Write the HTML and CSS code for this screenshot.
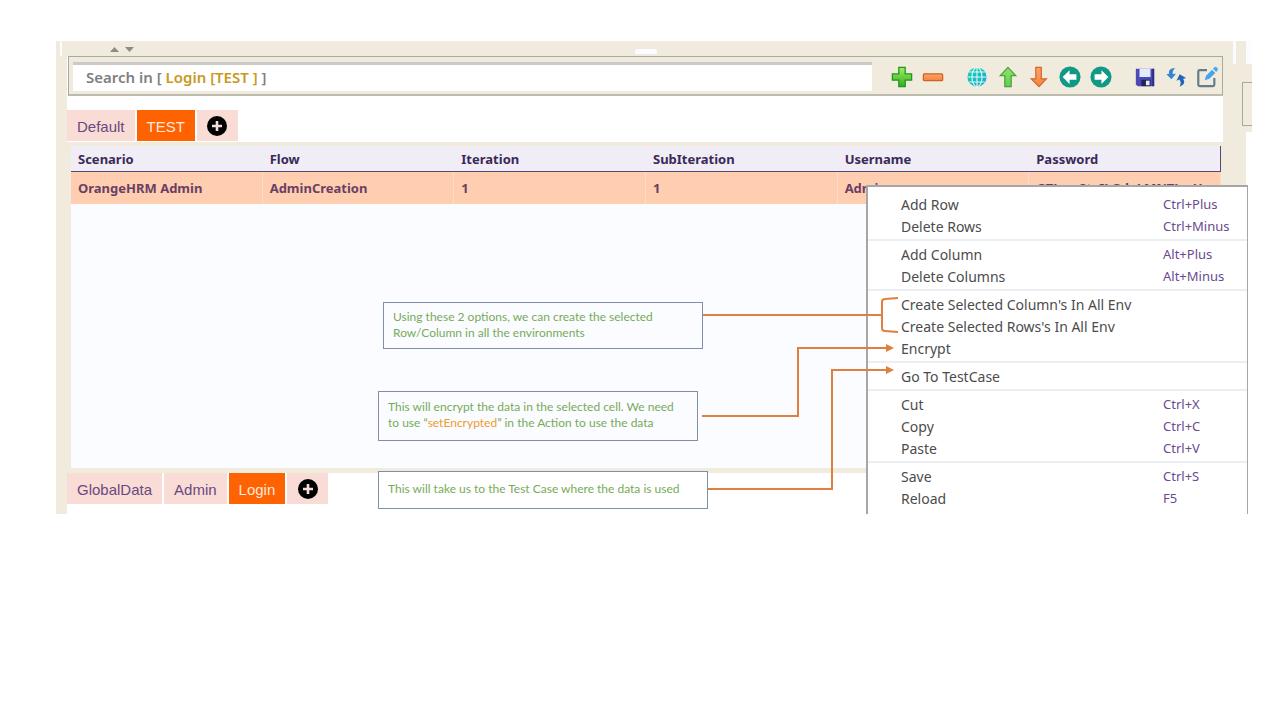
FILE: index.html
```
<!DOCTYPE html>
<html lang="en">
<head>
<meta charset="utf-8">
<title>Test Data</title>
<link rel="stylesheet" href="styles.css">
</head>
<body>
<main class="workspace">
  <div class="splitter">
    <svg class="split-arrows" viewBox="0 0 26 8"><path d="M1 7L5.500 2L10 7ZM16 2H25L20.500 7Z" fill="#8f8b86"/></svg>
    <span class="grip"></span>
  </div>

  <section class="content">
    <div class="toolbar">
      <div class="search">
        <label for="search">Search in [ <b>Login [TEST ]</b> ]</label>
        <input id="search" type="text">
      </div>
      <div class="tools">
        <button type="button" aria-label="Add row"><svg viewBox="0 0 24 24"><defs><linearGradient id="gr" x2="0" y2="1"><stop stop-color="#a5ec6b"/><stop offset="1" stop-color="#2fae1f"/></linearGradient><linearGradient id="lg" x2="0" y2="1"><stop stop-color="#8fe070"/><stop offset="1" stop-color="#62cf4c"/></linearGradient><linearGradient id="or" x2="0" y2="1"><stop stop-color="#ffa263"/><stop offset="1" stop-color="#f58542"/></linearGradient><linearGradient id="gl" x2="1" y2="1"><stop stop-color="#19d2b4"/><stop offset="1" stop-color="#12a9d6"/></linearGradient></defs><path d="M8.500 1.500H15.500V8.500H22.500V15.500H15.500V22.500H8.500V15.500H1.500V8.500H8.500Z" fill="url(#gr)" stroke="#22961b" stroke-width="1.400"/></svg></button>
        <button type="button" aria-label="Delete row"><svg viewBox="0 0 24 24"><rect x="1.500" y="8.500" width="21" height="7.500" rx="1" fill="url(#or)" stroke="#cc6428" stroke-width="1.400"/></svg></button>
        <button type="button" class="group" aria-label="Global data"><svg viewBox="0 0 24 24"><circle cx="12" cy="12" r="10.500" fill="url(#gl)"/><path d="M12 1.500V22.500M1.500 12H22.500M3.500 6.500H20.500M3.500 17.500H20.500" stroke="#e5f8ef" stroke-width="1.200"/><ellipse cx="12" cy="12" rx="5.500" ry="10.500" fill="none" stroke="#e5f8ef" stroke-width="1.200"/></svg></button>
        <button type="button" aria-label="Move up"><svg viewBox="0 0 24 24"><path d="M12 1.500L20.500 10.500H15.500V22.500H8.500V10.500H3.500Z" fill="url(#lg)" stroke="#4aa138" stroke-width="1.300"/></svg></button>
        <button type="button" aria-label="Move down"><svg viewBox="0 0 24 24"><path d="M12 22.500L3.500 14H8.500V1.500H14.500V14H20Z" fill="url(#or)" stroke="#d0672f" stroke-width="1.300"/></svg></button>
        <button type="button" aria-label="Previous"><svg viewBox="0 0 24 24"><circle cx="12" cy="12" r="11.500" fill="#109a86"/><path d="M4 12L11.500 4.500V9H19V15H11.500V19.500Z" fill="#fff"/></svg></button>
        <button type="button" aria-label="Next"><svg viewBox="0 0 24 24"><circle cx="12" cy="12" r="11.500" fill="#109a86"/><path d="M20 12L12.500 4.500V9H5V15H12.500V19.500Z" fill="#fff"/></svg></button>
        <button type="button" class="group" aria-label="Save"><svg viewBox="0 0 24 24"><path d="M2 3H22V22H4L2 20Z" fill="#4a49b8"/><path d="M6 3H18V12H6Z" fill="#e4ebfb"/><path d="M8 15H18V22H8Z" fill="#22234f"/><path d="M13 16H17V21H13Z" fill="#e8ebff"/><path d="M20 3H22V22H20Z" fill="#2b2b83"/></svg></button>
        <button type="button" aria-label="Reload"><svg viewBox="0 0 24 24"><path d="M11 2.500C6 2 3.500 5 4.500 8.500L1.500 9L7 14.500L12 8.500L8.500 8.800C8 6 9 4.500 11 2.500Z" fill="#3285d5"/><path d="M16 22.500C21.500 20.500 22 17 19.700 14.300L23 13L16 9L12.500 16L15.500 14.800C17.500 17 17.500 19 16 22.500Z" fill="#2466b4"/></svg></button>
        <button type="button" aria-label="Edit"><svg viewBox="0 0 24 24"><path d="M12 4.500H4Q2.500 4.500 2.500 6V20.500Q2.500 22 4 22H18.500Q20 22 20 20.500V13" fill="none" stroke="#637d89" stroke-width="2.400"/><path d="M9.500 15.500L11 10.500L17.500 4L21 7.500L14.500 14Z" fill="#42a5ed"/><path d="M18.500 3L20.500 1Q21.300 .3 22.200 1.200L23.700 2.700Q24.400 3.600 23.600 4.500L22 6.500Z" fill="#4eaaf0"/></svg></button>
      </div>
    </div>

    <nav class="tabs tabs-top" aria-label="Environments">
      <button type="button" class="tab">Default</button>
      <button type="button" class="tab active">TEST</button>
      <button type="button" class="tab add" aria-label="Add environment"><svg viewBox="0 0 20 20"><circle cx="10" cy="10" r="10"/><path d="M10 5V15M5 10H15" stroke="#f8dcd5" stroke-width="2.600"/></svg></button>
    </nav>

    <div class="grid-pane">
      <table class="data">
        <thead><tr><th>Scenario</th><th>Flow</th><th>Iteration</th><th>SubIteration</th><th>Username</th><th>Password</th></tr></thead>
        <tbody><tr><td>OrangeHRM Admin</td><td>AdminCreation</td><td>1</td><td>1</td><td>Admin</td><td>GTLw+StvILGdeLMNTLwU</td></tr></tbody>
      </table>
    </div>

    <nav class="tabs" aria-label="Data sheets">
      <button type="button" class="tab">GlobalData</button>
      <button type="button" class="tab">Admin</button>
      <button type="button" class="tab active">Login</button>
      <button type="button" class="tab add" aria-label="Add sheet"><svg viewBox="0 0 20 20"><circle cx="10" cy="10" r="10"/><path d="M10 5V15M5 10H15" stroke="#f8dcd5" stroke-width="2.600"/></svg></button>
    </nav>
  </section>

  <aside class="side">
    <div class="side-top"></div>
    <div class="side-tab"></div>
  </aside>

  <div class="menu" role="menu">
    <button type="button" role="menuitem"><span>Add Row</span><kbd>Ctrl+Plus</kbd></button>
    <button type="button" role="menuitem"><span>Delete Rows</span><kbd>Ctrl+Minus</kbd></button>
    <hr>
    <button type="button" role="menuitem"><span>Add Column</span><kbd>Alt+Plus</kbd></button>
    <button type="button" role="menuitem"><span>Delete Columns</span><kbd>Alt+Minus</kbd></button>
    <hr>
    <button type="button" role="menuitem"><span>Create Selected Column's In All Env</span></button>
    <button type="button" role="menuitem"><span>Create Selected Rows's In All Env</span></button>
    <button type="button" role="menuitem"><span>Encrypt</span></button>
    <hr>
    <button type="button" role="menuitem"><span>Go To TestCase</span></button>
    <hr>
    <button type="button" role="menuitem"><span>Cut</span><kbd>Ctrl+X</kbd></button>
    <button type="button" role="menuitem"><span>Copy</span><kbd>Ctrl+C</kbd></button>
    <button type="button" role="menuitem"><span>Paste</span><kbd>Ctrl+V</kbd></button>
    <hr>
    <button type="button" role="menuitem"><span>Save</span><kbd>Ctrl+S</kbd></button>
    <button type="button" role="menuitem"><span>Reload</span><kbd>F5</kbd></button>
  </div>

  <p class="note note-env">Using these 2 options, we can create the selected<br>Row/Column in all the environments</p>
  <p class="note note-encrypt">This will encrypt the data in the selected cell. We need<br>to use “<em>setEncrypted</em>” in the Action to use the data</p>
  <p class="note note-goto">This will take us to the Test Case where the data is used</p>

  <svg class="connectors" width="200" height="210" viewBox="0 0 200 210" fill="none" stroke="#e07f3e" stroke-width="2">
    <path d="M3 25H182M198 8L185 9Q182 9 182 12V38Q182 41 185 41L198 42"/>
    <path d="M2 126H98V58H188M8 199H132V80H188"/>
    <path d="M186 54L194 58L186 62ZM186 76L194 80L186 84Z" fill="#e07f3e" stroke="none"/>
  </svg>
</main>
</body>
</html>
```
FILE: styles.css
```
* { box-sizing: border-box; }

body {
  margin: 0;
  background: #fff;
  font-family: "Noto Sans", "Open Sans", sans-serif;
  font-size: 13px;
}

button {
  margin: 0;
  padding: 0;
  border: 0;
  background: none;
  font: inherit;
  color: inherit;
}

.workspace {
  position: relative;
  display: grid;
  grid-template-columns: 11px 1fr 29px;
  grid-template-rows: 15px auto;
  margin: 41px 28px 0 56px;
  background: #f1ebde;
}

.splitter {
  grid-column: 1 / 3;
  display: flex;
  align-items: flex-start;
  margin-left: 4px;
  border-left: 2px solid #fafcff;
  padding-left: 47px;
}

.split-arrows { width: 26px; height: 8px; margin-top: 4px; }

.grip {
  width: 22px;
  height: 5px;
  margin: 8px auto 0 500px;
  border-radius: 3px 3px 0 0;
  background: #fafcff;
}

.content {
  grid-column: 2;
  grid-row: 2;
  display: flex;
  flex-direction: column;
  background: #fff;
}

.toolbar {
  display: flex;
  height: 40px;
  margin-left: 1px;
  padding: 5px 0 3px 4px;
  border: 1px solid #aaa9a0;
  border-bottom: 2px solid #bdbbad;
  background: #f1ebde;
}

.search {
  flex: 1;
  display: flex;
  align-items: center;
  padding: 0 0 3px 13px;
  border-top: 3px solid #cccac8;
  background: #fff;
  font-size: 15px;
  line-height: 20px;
  font-weight: 600;
  color: #808080;
}

.search b { font-weight: 600; color: #c99a22; }

.search input {
  flex: 1;
  min-width: 0;
  padding: 0;
  border: 0;
  outline: 0;
  background: none;
  font: inherit;
}

.tools { display: flex; margin-left: 14px; }
.tools button { display: grid; place-items: center; width: 31px; }
.tools .group { margin-left: 13px; }
.tools svg { width: 22px; height: 22px; }

.tabs {
  display: flex;
  gap: 2px;
  height: 41px;
  padding-bottom: 10px;
  font-family: "Liberation Sans", Arial, sans-serif;
  font-size: 15px;
  color: #6b4880;
}

.tabs-top { height: 46px; padding: 14px 0 1px; }

.tab { padding: 1px 10px 0; background: #f8dcd5; }
.tab.active { background: #ff6200; color: #ffe9dc; }
.tab.add { display: grid; place-items: center; width: 41px; padding: 0; }
.tab svg { width: 20px; height: 20px; }

.grid-pane {
  height: 331px;
  border: solid #f1ebde;
  border-width: 4px 2px 5px 4px;
  background: #fbfcff;
}

.data {
  width: 100%;
  table-layout: fixed;
  border-collapse: separate;
  border-spacing: 0;
  font-weight: 700;
  text-align: left;
}

.data th,
.data td { padding: 0 7px; white-space: nowrap; overflow: hidden; }

.data th {
  height: 26px;
  border-bottom: 1px solid #584775;
  background: #f0edf7;
  color: #3a2a55;
}

.data th:last-child { border-right: 1px solid #584775; }

.data td {
  height: 32px;
  border-right: 1px solid #ffdcc6;
  background: #ffceb1;
  color: #6b3f63;
}

.side {
  grid-column: 3;
  grid-row: 1 / 3;
  display: flex;
  flex-direction: column;
  align-items: flex-end;
}

.side::after { content: ""; flex: 1; width: 6px; background: #fff; }

.side-top {
  width: 19px;
  height: 23px;
  border: solid #fafcff;
  border-width: 0 6px 0 3px;
}

.side-tab {
  width: 10px;
  height: 44px;
  margin: 18px 0 6px;
  border: 1px solid #aaa9a0;
  border-right: 0;
}

.menu {
  position: absolute;
  left: 810px;
  top: 144px;
  bottom: 0;
  width: 382px;
  padding-top: 6px;
  border: solid #a6a6a6;
  border-width: 2px 1px 0 2px;
  background: #fff;
  font-size: 14px;
}

.menu button {
  display: grid;
  grid-template-columns: 1fr 84px;
  align-items: center;
  width: 100%;
  height: 22px;
  padding-left: 33px;
  color: #4c4c4c;
  text-align: left;
}

.menu kbd { font-family: inherit; font-size: 13px; color: #6b4a90; }

.menu hr {
  height: 2px;
  margin: 2px 0;
  border: 0;
  background: #ebeff3;
}

.note {
  position: absolute;
  margin: 0;
  padding: 6px 9px;
  border: 1px solid #7f8fa9;
  font-family: Lato, "Noto Sans", sans-serif;
  font-size: 12px;
  line-height: 16px;
  color: #77ab58;
  white-space: nowrap;
}

.note em { font-style: normal; color: #f09a2a; }

.note-env { left: 327px; top: 261px; width: 320px; height: 47px; }
.note-encrypt { left: 322px; top: 350px; width: 320px; height: 50px; padding-top: 7px; }
.note-goto { left: 322px; top: 430px; width: 330px; height: 38px; padding-top: 9px; background: #fff; }

.connectors { position: absolute; left: 644px; top: 249px; }
```
